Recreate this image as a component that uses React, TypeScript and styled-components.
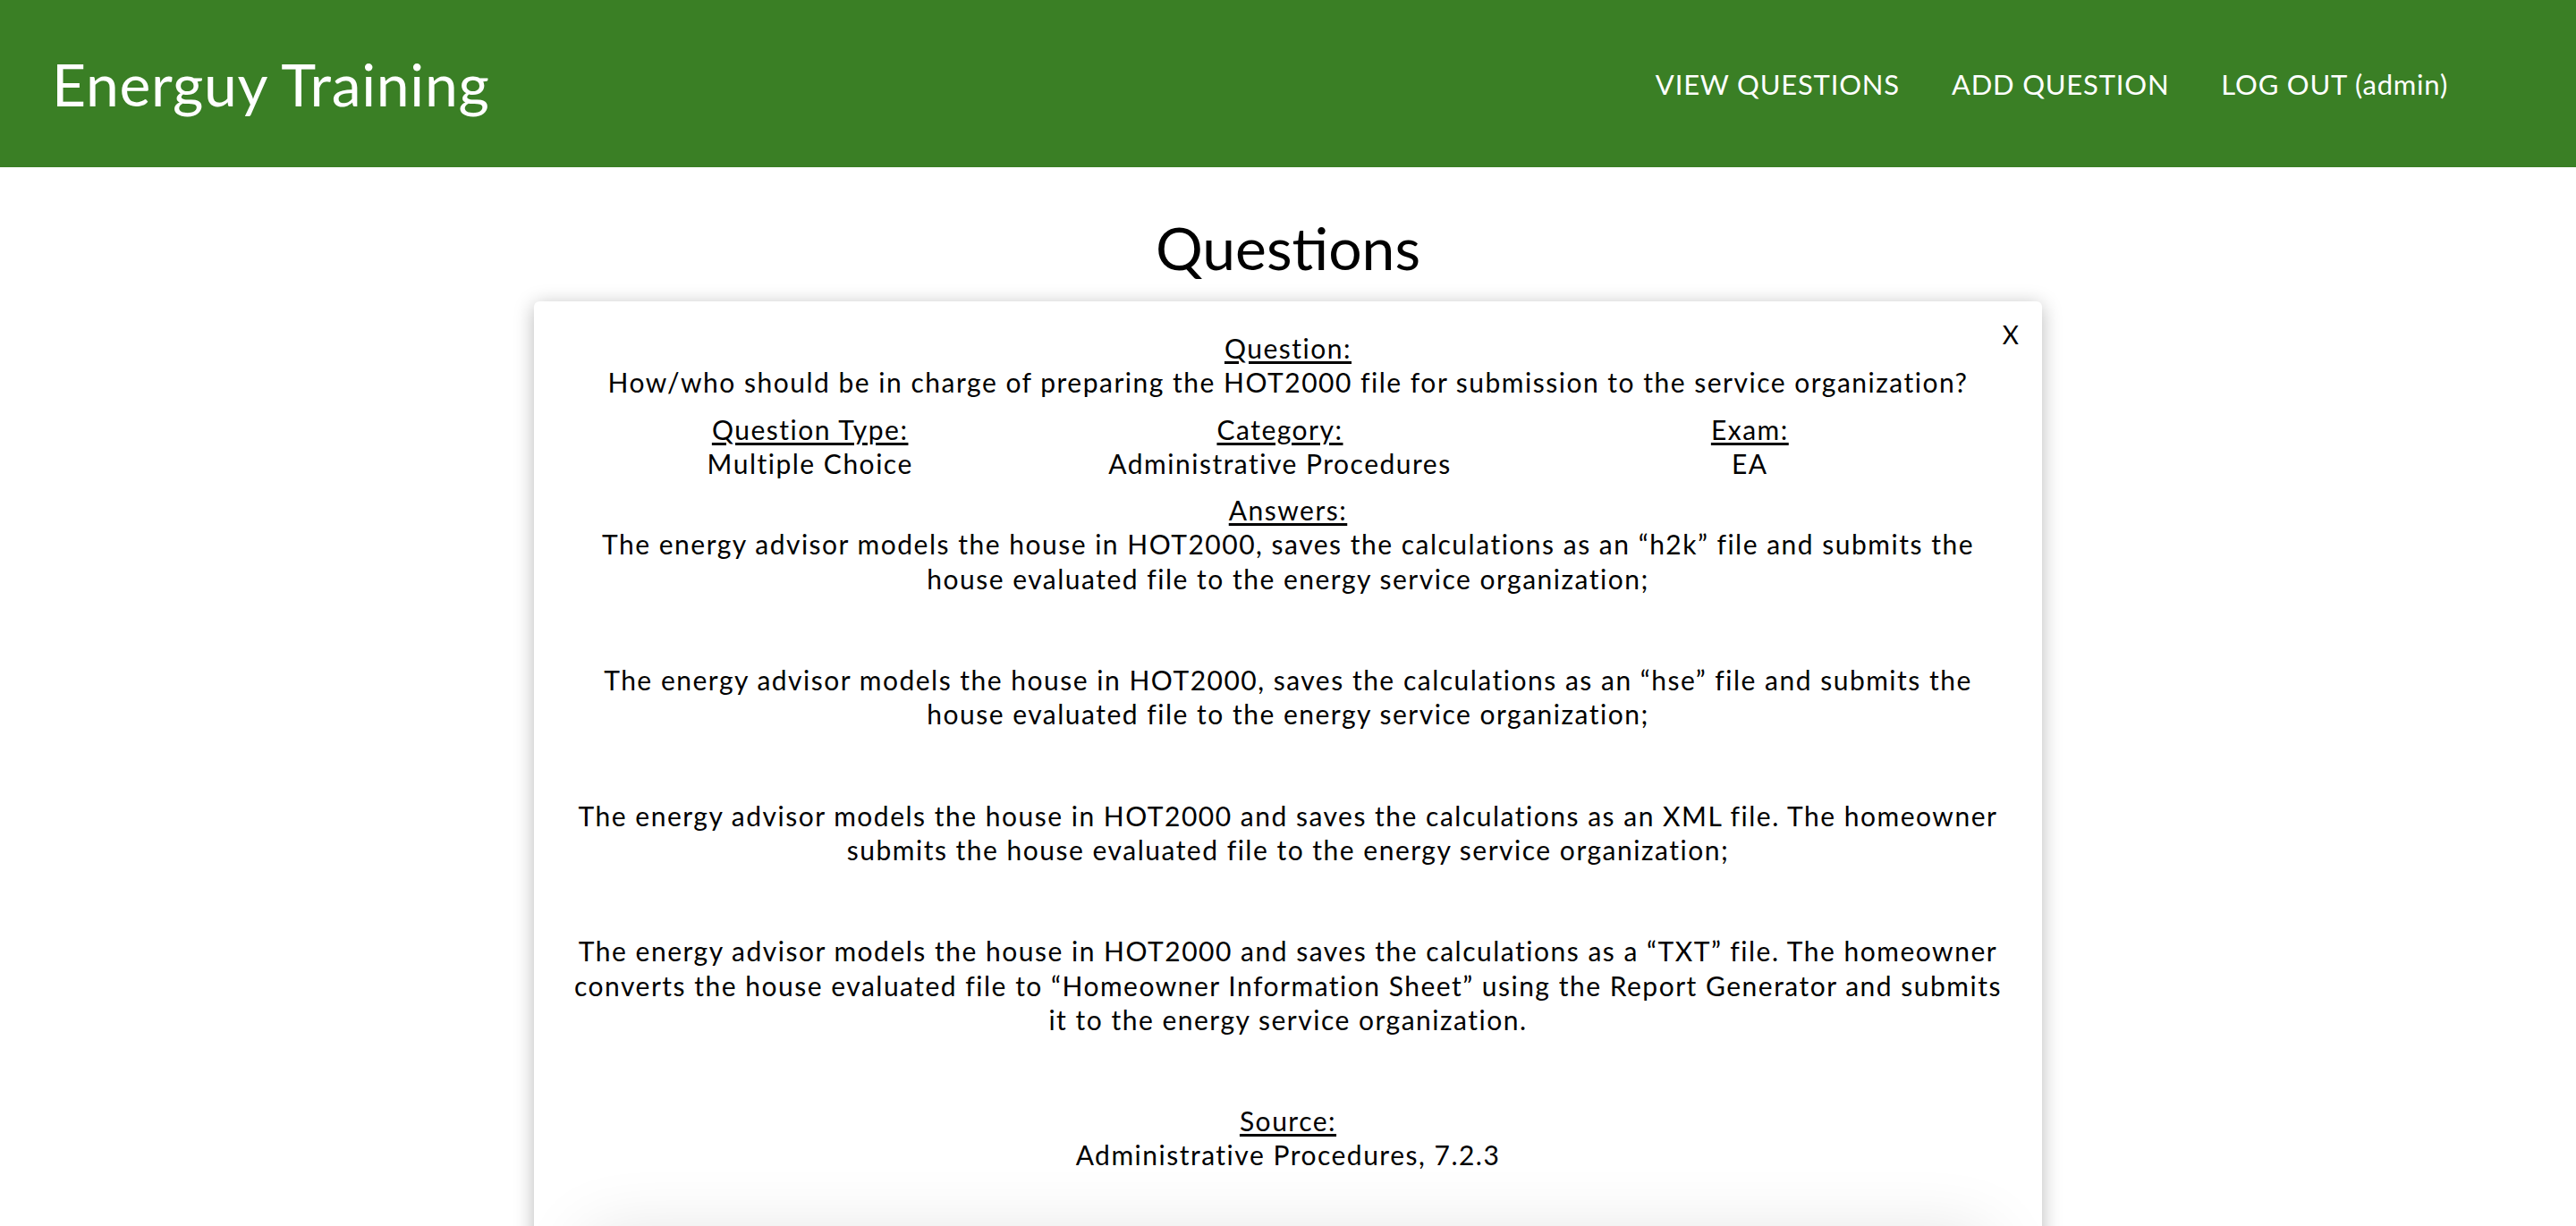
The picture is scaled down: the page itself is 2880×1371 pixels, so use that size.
import React from 'react';
import styled, { createGlobalStyle } from 'styled-components';

const colors = {
  green: '#3a7f25',
  white: '#ffffff',
  black: '#000000',
};

const GlobalStyle = createGlobalStyle`
  html, body {
    margin: 0;
    padding: 0;
    background: ${colors.white};
    font-family: 'Lato', 'Noto Sans', sans-serif;
    color: ${colors.black};
  }
`;

const answers = [
  'The energy advisor models the house in HOT2000, saves the calculations as an \u201ch2k\u201d file and submits the house evaluated file to the energy service organization;',
  'The energy advisor models the house in HOT2000, saves the calculations as an \u201chse\u201d file and submits the house evaluated file to the energy service organization;',
  'The energy advisor models the house in HOT2000 and saves the calculations as an XML file. The homeowner submits the house evaluated file to the energy service organization;',
  'The energy advisor models the house in HOT2000 and saves the calculations as a \u201cTXT\u201d file. The homeowner converts the house evaluated file to \u201cHomeowner Information Sheet\u201d using the Report Generator and submits it to the energy service organization.',
];

const NavBar = styled.header`
  height: 187px;
  background-color: ${colors.green};
  display: flex;
  align-items: center;
  justify-content: space-between;
  padding: 0 143px 0 58px;
  color: ${colors.white};
`;

const Brand = styled.div`
  font-size: 66px;
  letter-spacing: 0.7px;
`;

const NavLinks = styled.nav`
  display: flex;
  gap: 58px;
`;

const NavLink = styled.a`
  color: ${colors.white};
  font-size: 31px;
  letter-spacing: 0.8px;
  text-decoration: none;
  cursor: pointer;
`;

const Main = styled.main`
  display: flex;
  flex-direction: column;
  align-items: center;
`;

const PageTitle = styled.h1`
  margin: 50px 0 20px;
  font-size: 66px;
  font-weight: 400;
  line-height: 80px;
`;

const Card = styled.section`
  position: relative;
  width: 1686px;
  box-sizing: border-box;
  padding: 33px 40px 0;
  border-radius: 6px;
  background: ${colors.white};
  box-shadow: 0 4px 22px rgba(0, 0, 0, 0.28);
  text-align: center;
  font-size: 30px;
  line-height: 38.3px;
  letter-spacing: 1.5px;
`;

const CloseButton = styled.button`
  position: absolute;
  top: 23px;
  right: 26px;
  border: 0;
  background: none;
  padding: 0;
  font-family: inherit;
  font-size: 28px;
  font-weight: 400;
  line-height: 28px;
  color: ${colors.black};
  cursor: pointer;
`;

const Field = styled.div`
  margin-bottom: 14px;
`;

const Label = styled.div`
  text-decoration: underline;
  text-underline-offset: 3px;
`;

const MetaRow = styled.div`
  display: grid;
  grid-template-columns: repeat(3, 1fr);
  padding: 0 24px 0 6px;
  margin-bottom: 14px;
`;

const Answer = styled.p`
  margin: 0 0 75px;
`;

const NextCard = styled.div`
  margin: 70px 20px 0;
  height: 200px;
  border-radius: 6px;
  background: ${colors.white};
  box-shadow: 0 0 80px rgba(0, 0, 0, 0.12);
`;

const App = () => {
  return (
    <>
      <GlobalStyle />
      <NavBar>
        <Brand>Energuy Training</Brand>
        <NavLinks>
          <NavLink>VIEW QUESTIONS</NavLink>
          <NavLink>ADD QUESTION</NavLink>
          <NavLink>LOG OUT (admin)</NavLink>
        </NavLinks>
      </NavBar>
      <Main>
        <PageTitle>Questions</PageTitle>
        <Card>
          <CloseButton>X</CloseButton>
          <Field>
            <Label>Question:</Label>
            <div>
              How/who should be in charge of preparing the HOT2000 file for submission to the service
              organization?
            </div>
          </Field>
          <MetaRow>
            <div>
              <Label>Question Type:</Label>
              <div>Multiple Choice</div>
            </div>
            <div>
              <Label>Category:</Label>
              <div>Administrative Procedures</div>
            </div>
            <div>
              <Label>Exam:</Label>
              <div>EA</div>
            </div>
          </MetaRow>
          <Label>Answers:</Label>
          {answers.map((a) => (
            <Answer key={a}>{a}</Answer>
          ))}
          <Label>Source:</Label>
          <div>Administrative Procedures, 7.2.3</div>
          <NextCard />
        </Card>
      </Main>
    </>
  );
};

export default App;
